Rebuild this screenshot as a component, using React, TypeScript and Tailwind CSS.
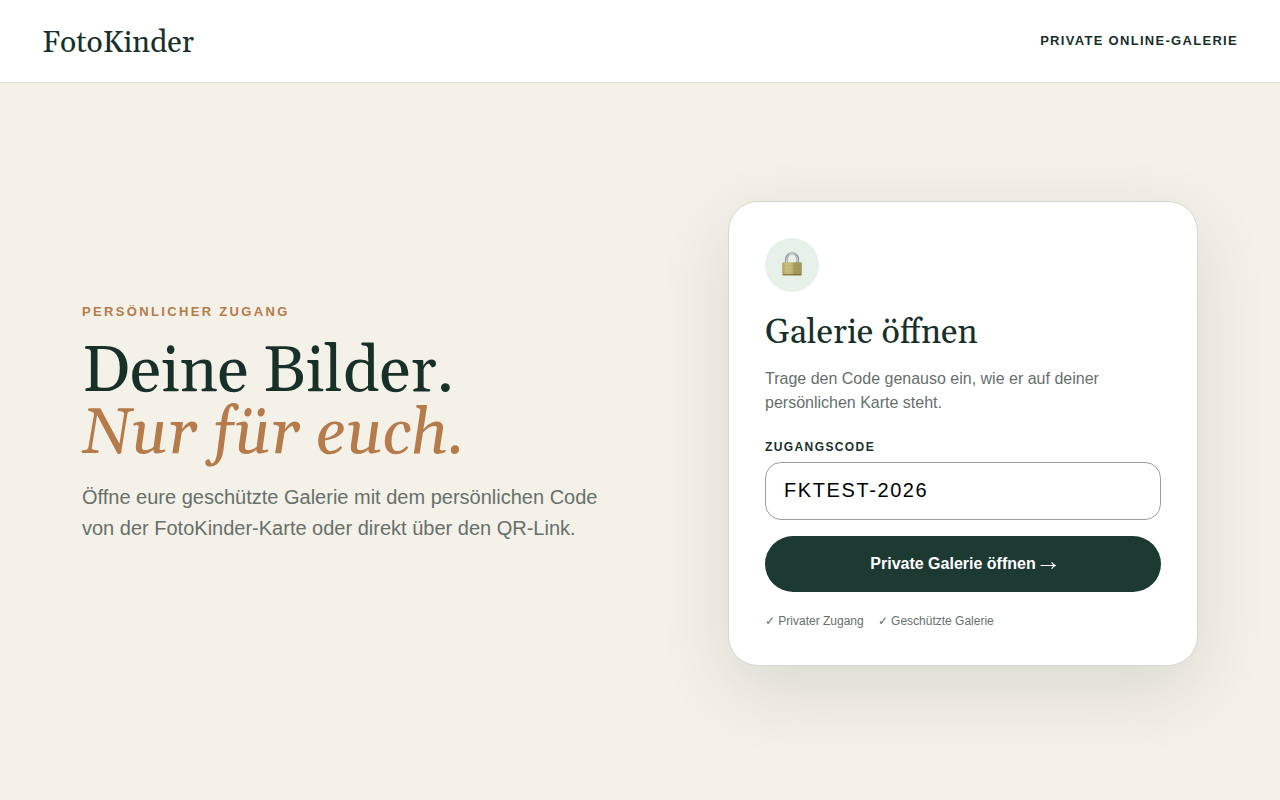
import { useState } from "react"

const badges = ["Privater Zugang", "Geschützte Galerie"]

function Lock() {
	return (
		<svg viewBox="0 0 24 26" className="h-[26px] w-6" aria-hidden="true">
			<defs>
				<linearGradient id="body" x1="0" x2="1" y1="0" y2="0">
					<stop offset="0" stopColor="#b5a55f" />
					<stop offset="0.2" stopColor="#cbbe7e" />
					<stop offset="0.5" stopColor="#c4b673" />
					<stop offset="0.62" stopColor="#a49a5e" />
					<stop offset="1" stopColor="#a1975c" />
				</linearGradient>
				<linearGradient id="shackle" x1="0" x2="1" y1="0" y2="0">
					<stop offset="0" stopColor="#8d9298" />
					<stop offset="0.5" stopColor="#a9aeb4" />
					<stop offset="1" stopColor="#858a91" />
				</linearGradient>
			</defs>
			<path
				d="M6.4 12V7.4a5.7 5.9 0 0 1 11.4 0V12"
				fill="none"
				stroke="url(#shackle)"
				strokeWidth="2.6"
			/>
			<path
				d="M6.6 11V7.5a5.5 5.6 0 0 1 11 0V11"
				fill="none"
				stroke="#dde1e5"
				strokeWidth="0.9"
			/>
			<rect x="2.2" y="10.2" width="19.6" height="13" rx="0.8" fill="url(#body)" />
			<path d="M2.2 13.8h19.6M2.2 17h19.6M2.2 20.2h19.6" stroke="#94863f" strokeOpacity="0.2" strokeWidth="0.7" />
			<path d="M2.8 22.8h18.4" stroke="#6e602e" strokeWidth="1" />
		</svg>
	)
}

function Arrow() {
	return (
		<svg
			viewBox="0 0 16 16"
			className="size-4"
			fill="none"
			stroke="currentColor"
			strokeWidth="1.2"
			aria-hidden="true"
		>
			<path d="M0.5 9.5H15M11.6 6.2Q12.8 8.6 15.2 9.5Q12.8 10.4 11.6 12.8" />
		</svg>
	)
}

export default function App() {
	const [code, setCode] = useState("FKTEST-2026")

	return (
		<div className="min-h-screen bg-[#f4f1e8] font-['Liberation_Sans',Arial,sans-serif] text-[#17302a]">
			<header className="flex items-center justify-between border-b border-[#d9ddd6] bg-white px-[42px] py-[22px]">
				<a href="#" className="pt-1 font-[Georgia,Gelasio,'Liberation_Serif',serif] text-[30px] leading-[34px]">
					FotoKinder
				</a>
				<span className="text-[13px] font-bold tracking-[1.3px] uppercase">
					Private Online-Galerie
				</span>
			</header>
			<main className="mx-auto grid min-h-[calc(100vh-100px)] max-w-[1200px] items-center gap-16 px-[42px] py-12 md:grid-cols-[1fr_470px]">
				<section className="pb-5">
					<p className="text-[13px] leading-5 font-bold tracking-[0.18em] text-[#b57b4a] uppercase">
						Persönlicher Zugang
					</p>
					<h1 className="mt-5 font-[Georgia,Gelasio,'Liberation_Serif',serif] text-[64px] leading-[62px]">
						Deine Bilder.
						<br />
						<em className="text-[#b57b4a]">Nur für euch.</em>
					</h1>
					<p className="mt-4 max-w-[540px] text-xl leading-[31px] text-[#66706b]">
						Öffne eure geschützte Galerie mit dem persönlichen Code von der
						FotoKinder-Karte oder direkt über den QR-Link.
					</p>
				</section>
				<form
					onSubmit={(e) => e.preventDefault()}
					className="rounded-[30px] border border-[#d3d8d1] bg-white p-9 shadow-[0_24px_70px_rgba(23,48,42,0.12)]"
				>
					<div className="flex size-[54px] items-center justify-center rounded-full bg-[#e8f0ea]">
						<Lock />
					</div>
					<h2 className="mt-5 font-[Georgia,Gelasio,'Liberation_Serif',serif] text-[34px] leading-[42px]">
						Galerie öffnen
					</h2>
					<p className="mt-[13px] text-base leading-6 text-[#66706b]">
						Trage den Code genauso ein, wie er auf deiner persönlichen Karte
						steht.
					</p>
					<label
						htmlFor="code"
						className="mt-6 block text-xs leading-4 font-bold tracking-[1.4px] uppercase"
					>
						Zugangscode
					</label>
					<input
						id="code"
						value={code}
						onChange={(e) => setCode(e.target.value)}
						className="mt-[7px] h-[58px] w-full rounded-2xl border border-[#9a9f9c] bg-white px-[18px] text-xl tracking-[1.6px] text-black"
					/>
					<button
						type="submit"
						className="mt-4 flex h-14 w-full items-center justify-center gap-1 rounded-full bg-[#1d3a32] text-base font-bold text-white"
					>
						Private Galerie öffnen
						<Arrow />
					</button>
					<ul className="mt-[21px] flex gap-3.5 text-xs leading-4 text-[#66706b]">
						{badges.map((badge) => (
							<li key={badge}>✓ {badge}</li>
						))}
					</ul>
				</form>
			</main>
		</div>
	)
}
